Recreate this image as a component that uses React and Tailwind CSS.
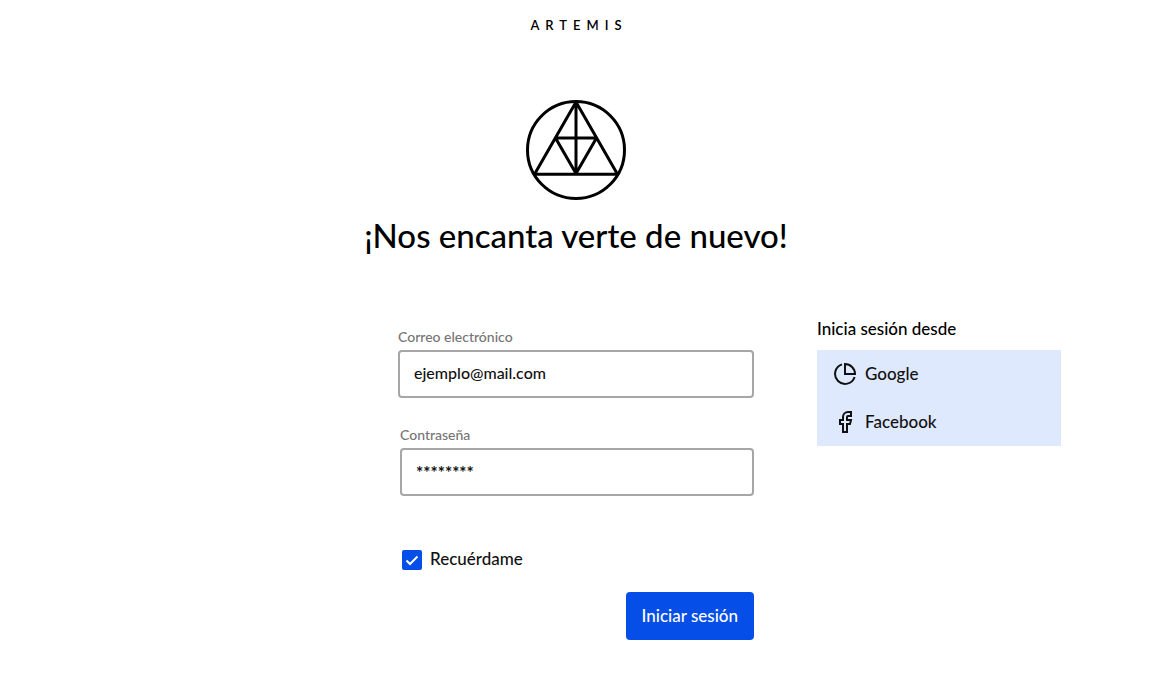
import React from "react";

function Logo() {
  return (
    <svg viewBox="0 0 100 100" className="size-[100px]" fill="none" stroke="#000" strokeWidth="3" strokeLinejoin="bevel" aria-hidden="true">
      <circle cx="50" cy="50" r="48.5" />
      <path d="M50 2 L91.5 74.2 H8.5 Z M50 2 V74 M29.5 38 H70.5 L50 73.5 Z" />
    </svg>
  );
}

function GoogleIcon() {
  return (
    <svg viewBox="0 0 24 24" className="size-6" fill="none" stroke="#111" strokeWidth="2" aria-hidden="true">
      <path d="M12 2 V12 H22 A10 10 0 0 0 12 2 Z" />
      <path d="M9 2.4 A10 10 0 1 0 21.6 15" />
    </svg>
  );
}

function FacebookIcon() {
  return (
    <svg viewBox="0 0 24 24" className="size-6" fill="none" stroke="#111" strokeWidth="2" aria-hidden="true">
      <path d="M18 2h-3a5 5 0 0 0-5 5v3H7v4h3v8h4v-8h3l1-4h-4V7a1 1 0 0 1 1-1h3z" />
    </svg>
  );
}

function Field({ id, label, className = "", inputClassName = "pb-1 text-base", ...props }) {
  return (
    <div className={`flex flex-col ${className}`}>
      <label htmlFor={id} className="mb-0.5 text-sm leading-[22px] text-[#757575]">{label}</label>
      <input
        id={id}
        className={`h-12 w-full rounded border-2 border-[#a6a6a6] bg-white px-3.5 text-[#111] outline-none focus:border-[#054ee8] ${inputClassName}`}
        {...props}
      />
    </div>
  );
}

export default function App() {
  return (
    <div className="bg-white pb-10 font-['Lato','Open_Sans',sans-serif] font-medium text-black">
      <header className="flex h-[50px] items-center justify-center">
        <a href="#" className="pl-1.5 text-[13px] leading-4 font-semibold tracking-[6px]">ARTEMIS</a>
      </header>
      <main>
        <div className="flex flex-col items-center pt-[50px]">
          <Logo />
          <h1 className="mt-4 text-center text-[33px] leading-[38px]">¡Nos encanta verte de nuevo!</h1>
        </div>
        <div className="mt-16 grid grid-cols-[1fr_356px_1fr]">
          <form className="col-start-2 pt-2" onSubmit={(e) => e.preventDefault()}>
            <Field id="email" label="Correo electrónico" type="text" inputMode="email" defaultValue="ejemplo@mail.com" />
            <Field id="password" label="Contraseña" type="text" autoComplete="current-password" defaultValue="********" className="mt-[26px] pl-0.5" inputClassName="text-[17px] font-bold" />
            <div className="mt-[52px] flex items-center gap-2 pl-1">
              <span className="relative flex size-5">
                <input id="remember" type="checkbox" defaultChecked className="peer size-5 appearance-none rounded-xs border-2 border-[#054ee8] checked:bg-[#054ee8]" />
                <svg viewBox="0 0 20 20" className="pointer-events-none absolute inset-0 hidden size-5 peer-checked:block" fill="none" stroke="#fff" strokeWidth="2" aria-hidden="true">
                  <path d="M4.5 10.5 L8 14 L15.5 6.5" />
                </svg>
              </span>
              <label htmlFor="remember" className="pb-0.5 text-[17px] leading-[22px] text-[#111]">Recuérdame</label>
            </div>
            <div className="mt-5 flex justify-end">
              <button type="submit" className="h-12 rounded bg-[#054ee8] px-4 text-[17px] text-white">Iniciar sesión</button>
            </div>
          </form>
          <aside className="pl-[63px]">
            <h2 className="text-[17px] leading-[22px]">Inicia sesión desde</h2>
            <ul className="mt-2.5 w-[244px] bg-[#dfe9fe]">
              <li>
                <a href="#" className="flex h-12 items-center gap-2 px-4 text-[17px] leading-5 text-[#111]"><GoogleIcon />Google</a>
              </li>
              <li>
                <a href="#" className="flex h-12 items-center gap-2 px-4 text-[17px] leading-5 text-[#111]"><FacebookIcon />Facebook</a>
              </li>
            </ul>
          </aside>
        </div>
      </main>
    </div>
  );
}
